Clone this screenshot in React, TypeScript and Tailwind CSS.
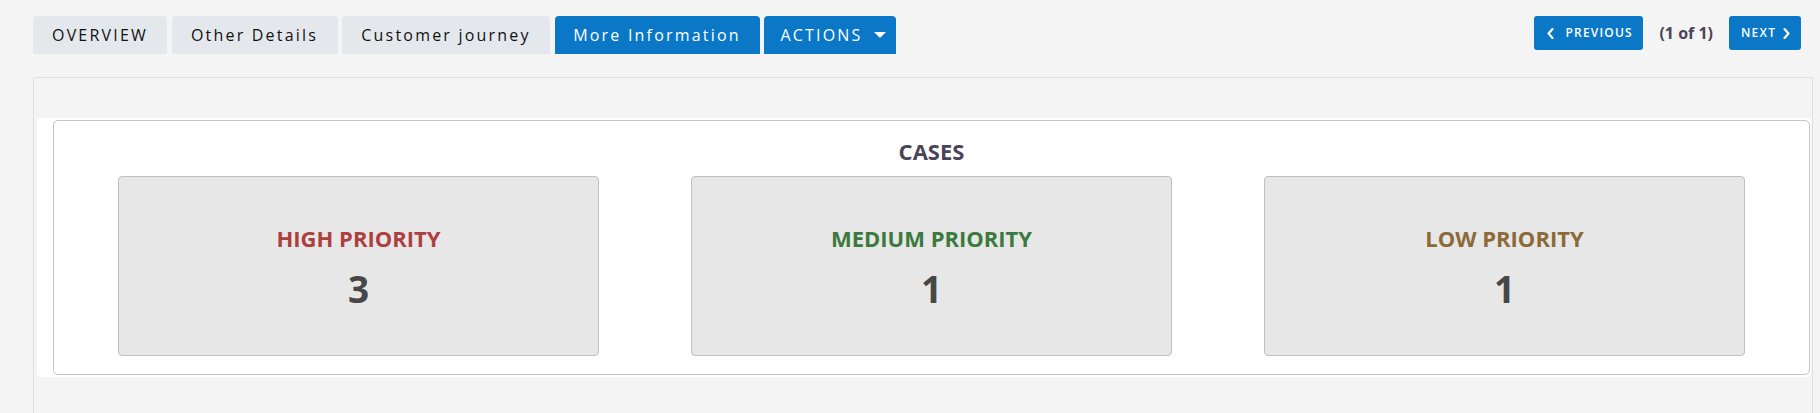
import React from "react";

const TABS = [
  { label: "OVERVIEW", active: false, width: "w-[134px]" },
  { label: "Other Details", active: false, width: "w-[166px]" },
  { label: "Customer journey", active: false, width: "w-[208px]" },
  { label: "More Information", active: true, width: "w-[205px]" },
];

const CASES = [
  { label: "HIGH PRIORITY", count: 3, color: "text-[#ad3f40]" },
  { label: "MEDIUM PRIORITY", count: 1, color: "text-[#3b7a3d]" },
  { label: "LOW PRIORITY", count: 1, color: "text-[#8b6a38]" },
];

function Chevron({ dir }: { dir: "left" | "right" }) {
  return (
    <svg width="7" height="11" viewBox="0 0 7 11" className="shrink-0">
      <polyline
        points={dir === "left" ? "5.5,1 1.5,5.5 5.5,10" : "1.5,1 5.5,5.5 1.5,10"}
        fill="none"
        stroke="white"
        strokeWidth="2.2"
        strokeLinecap="round"
        strokeLinejoin="round"
      />
    </svg>
  );
}

export default function App() {
  return (
    <div className="h-[413px] overflow-hidden bg-[#f4f4f4] font-['Open_Sans',sans-serif]">
      {/* Tabs + pager */}
      <div className="flex items-start justify-between pl-[33px] pr-[19px] pt-[16px]">
        <div className="flex gap-[4.5px]">
          {TABS.map((t) => (
            <div
              key={t.label}
              className={`flex h-[38px] items-center justify-center rounded-t-[4px] text-[16px] tracking-[2.2px] ${t.width} ${
                t.active ? "bg-[#0a77c7] text-white" : "bg-[#e4e8ec] text-[#111]"
              }`}
            >
              {t.label}
            </div>
          ))}
          <div className="flex h-[38px] w-[132px] items-center justify-center gap-[11px] rounded-t-[4px] bg-[#0a77c7] pl-[6px] text-[16px] tracking-[2.2px] text-white">
            ACTIONS
            <svg width="12" height="6" viewBox="0 0 12 6">
              <polygon points="0,0 12,0 6,6" fill="white" />
            </svg>
          </div>
        </div>

        <div className="flex items-center gap-[16px]">
          <button className="flex h-[34px] w-[109px] items-center gap-[11px] rounded-[3px] bg-[#0a77c7] pl-[13px] text-[12px] font-semibold tracking-[1.2px] text-white">
            <Chevron dir="left" />
            PREVIOUS
          </button>
          <span className="text-[16px] font-bold text-[#4b4556]">(1 of 1)</span>
          <button className="flex h-[34px] w-[72px] items-center gap-[7px] rounded-[3px] bg-[#0a77c7] pl-[12px] text-[12px] font-semibold tracking-[1.2px] text-white">
            NEXT
            <Chevron dir="right" />
          </button>
        </div>
      </div>

      {/* Content area */}
      <div className="mt-[23px] ml-[33px] mr-[7px] h-[336px] border-x border-t border-[#e0e0e0] pt-[40px]">
        <div className="ml-[3px] mr-px rounded-[4px] bg-white py-[2px] pl-[16px] pr-px">
          <div className="rounded-[5px] border border-[#c4c4c4] bg-white px-[64px] pt-[15px] pb-[18px]">
            <h2 className="mb-[10px] text-center text-[22px] font-bold leading-[30px] text-[#4a4458]">
              CASES
            </h2>
            <div className="grid grid-cols-3 gap-[92px]">
              {CASES.map((c) => (
                <div
                  key={c.label}
                  className="flex h-[180px] flex-col items-center justify-center rounded-[4px] border border-[#c0c0c0] bg-[#e7e7e7] pt-[4px]"
                >
                  <div className={`text-[22px] font-bold leading-[28px] ${c.color}`}>{c.label}</div>
                  <div className="mt-[13px] text-[37px] font-bold leading-[48px] text-[#474747]">
                    {c.count}
                  </div>
                </div>
              ))}
            </div>
          </div>
        </div>
      </div>
    </div>
  );
}
